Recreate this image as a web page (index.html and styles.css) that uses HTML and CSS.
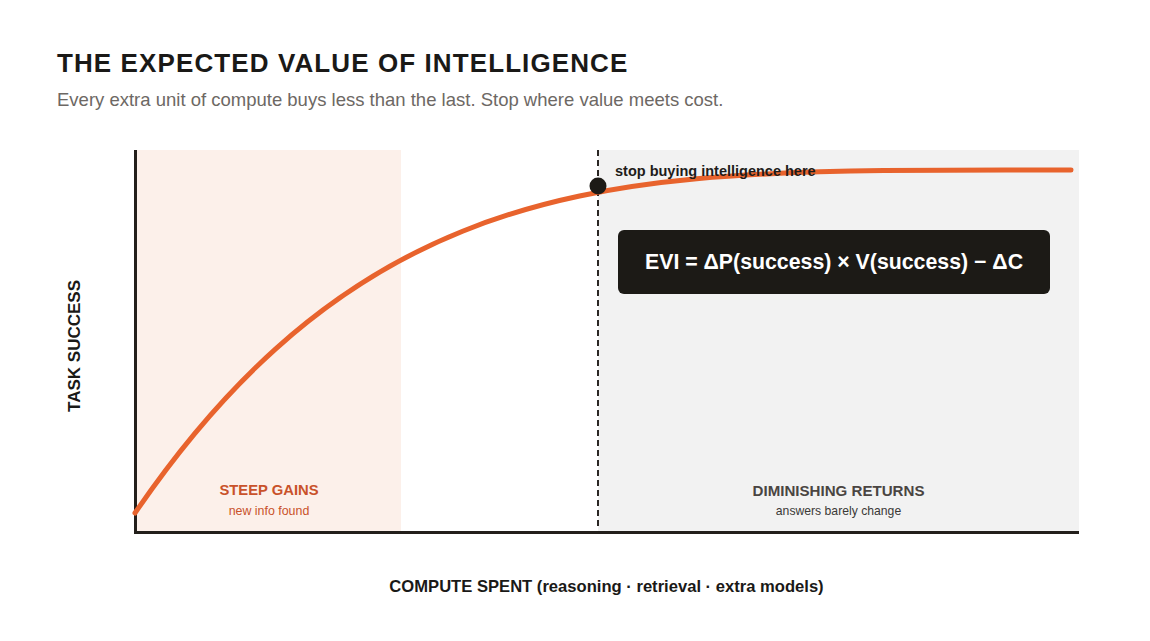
FILE: index.html
```html
<!DOCTYPE html>
<html lang="en">
<head>
<meta charset="utf-8">
<title>The Expected Value of Intelligence</title>
<link rel="stylesheet" href="styles.css">
</head>
<body>
<div class="page">
  <header class="header">
    <h1 class="title">THE EXPECTED VALUE OF INTELLIGENCE</h1>
    <p class="subtitle">Every extra unit of compute buys less than the last. Stop where value meets cost.</p>
  </header>

  <div class="chart-row">
    <div class="ylabel-col"><span class="ylabel">TASK SUCCESS</span></div>
    <div class="plot">
      <svg class="overlay" width="942" height="381" viewBox="137 150 942 381" aria-hidden="true">
        <line x1="598" y1="150" x2="598" y2="528" stroke="#2a2623" stroke-width="2" stroke-dasharray="6 4"/>
        <path d="M135,513 C181.8,444.4 228.6,391.2 275.4,349.05 C337.8,292.9 400.2,256.3 462.6,231.2 C540.6,199.8 618.6,186.1 696.6,178.8 C759,172.95 821.4,171.28 883.8,170.55 C946.2,169.82 1008.6,170 1071,170" fill="none" stroke="#e8632d" stroke-width="5" stroke-linecap="round"/>
        <circle cx="598" cy="186" r="8.5" fill="#1c1a16"/>
      </svg>
      <div class="zone zone-steep">
        <div class="zone-title steep">STEEP GAINS</div>
        <div class="zone-sub steep">new info found</div>
      </div>
      <div class="zone zone-mid"></div>
      <div class="zone zone-dim">
        <div class="flag">stop buying intelligence here</div>
        <div class="formula">EVI = ΔP(success) × V(success) − ΔC</div>
        <div class="zone-title dim">DIMINISHING RETURNS</div>
        <div class="zone-sub dim">answers barely change</div>
      </div>
    </div>
  </div>

  <div class="xlabel">COMPUTE SPENT (reasoning · retrieval · extra models)</div>
</div>
</body>
</html>
```

FILE: styles.css
```css
* { box-sizing: border-box; }

html, body {
  margin: 0;
  padding: 0;
  background: #ffffff;
}

body {
  font-family: "Liberation Sans", Arial, Helvetica, sans-serif;
  color: #1a1917;
}

.page {
  width: 1150px;
  height: 641px;
  overflow: hidden;
}

.header {
  padding: 48px 0 0 57px;
}

.title {
  margin: 0;
  font-size: 26px;
  line-height: 30px;
  font-weight: 700;
  letter-spacing: 1.1px;
  color: #1a1917;
}

.subtitle {
  margin: 11px 0 0 0;
  font-size: 18.5px;
  line-height: 22px;
  color: #6d6864;
}

.chart-row {
  display: flex;
  margin-top: 39px;
}

.ylabel-col {
  width: 134px;
  display: flex;
  align-items: center;
  justify-content: center;
  padding-left: 16px;
  padding-top: 8px;
}

.ylabel {
  writing-mode: vertical-rl;
  transform: rotate(180deg);
  font-size: 17px;
  font-weight: 700;
  color: #1a1917;
  white-space: nowrap;
}

.plot {
  position: relative;
  display: grid;
  grid-template-columns: 264px 197px 481px;
  height: 384px;
  border-left: 3px solid #231f1b;
  border-bottom: 3px solid #231f1b;
}

.overlay {
  position: absolute;
  left: 0;
  top: 0;
  overflow: visible;
}

.zone {
  display: flex;
  flex-direction: column;
  align-items: center;
  justify-content: flex-end;
  padding-bottom: 13px;
}

.zone-steep { background: #fcf0ea; }
.zone-mid { background: transparent; }
.zone-dim {
  background: #f2f2f2;
  align-items: stretch;
  padding-top: 13px;
}

.zone-title {
  font-size: 14.8px;
  line-height: 17px;
  font-weight: 700;
  text-align: center;
}

.zone-sub {
  margin-top: 5px;
  font-size: 12.4px;
  line-height: 14px;
  text-align: center;
}

.steep { color: #c9522a; }
.zone-title.dim { color: #4a4542; font-size: 15.1px; }
.zone-sub.dim { color: #3b3937; font-size: 12.2px; }

.flag {
  position: relative;
  margin-left: 17px;
  font-size: 14.5px;
  line-height: 17px;
  font-weight: 700;
  color: #1e1c1a;
}

.formula {
  margin: 50px 29px auto 20px;
  height: 64px;
  display: flex;
  align-items: center;
  justify-content: center;
  background: #1c1a16;
  border-radius: 6px;
  color: #ffffff;
  font-size: 21.3px;
  font-weight: 700;
}

.xlabel {
  margin: 43px 0 0 134px;
  width: 945px;
  text-align: center;
  font-size: 16.6px;
  line-height: 20px;
  font-weight: 700;
  color: #1a1917;
}
```
